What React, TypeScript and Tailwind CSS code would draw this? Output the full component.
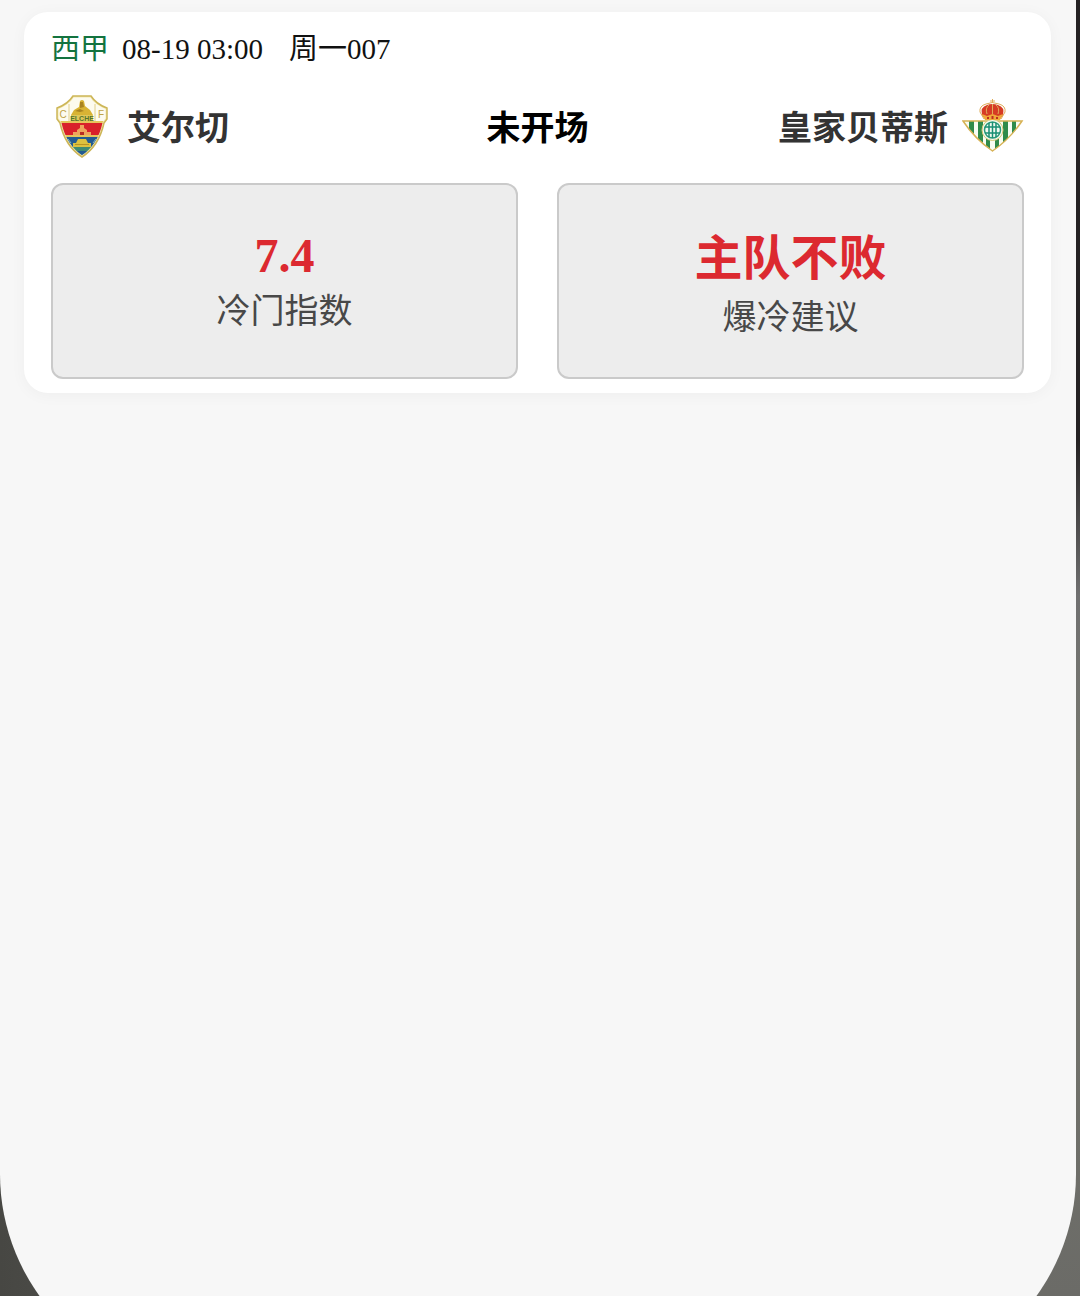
interface Team {
  name: string
  Crest: () => React.JSX.Element
}

interface Stat {
  value: string
  label: string
  valueClass: string
}

const elcheOutline = "M22 1h18Q45 9 56 13V24L53 28Q48 51 31 62Q14 51 9 28L6 24V13Q17 9 22 1Z"

function ElcheCrest() {
  return (
    <svg viewBox="0 0 62 64" className="h-16 w-[62px] shrink-0" role="img" aria-label="艾尔切">
      <defs>
        <clipPath id="elche-shield">
          <path d={elcheOutline} />
        </clipPath>
      </defs>
      <g clipPath="url(#elche-shield)">
        <path fill="#fdfbef" d="M0 0h62v64H0z" />
        <path fill="#d9202a" d="M0 28h62v13H0z" />
        <path fill="#245b91" d="M0 41h62v23H0z" />
        <path fill="#e5c45b" d="M0 26h62v2H0zM0 40h62v2H0z" />
        <path fill="#3f8a72" d="M16 52h30l-6 4H22z" />
        <path fill="none" stroke="#f3e9b4" strokeWidth="3" d={elcheOutline} />
      </g>
      <path fill="none" stroke="#e0cf8a" d="M18 9v17M44 9v17" />
      <path fill="#d8b334" d="M29 6q2-2 4 0l1 5 5 4 3 5H20l3-5 5-3z" />
      <path fill="#a98320" d="M29 7h3l1 5-4 1zM24 16l5-2 4 2-4 1z" />
      <path fill="#dfc75a" d="M20 20h22v6H20z" />
      <text x="31" y="26" textAnchor="middle" className="font-['Liberation_Sans'] text-[7px] font-bold" fill="#55752a">
        ELCHE
      </text>
      <text x="12" y="23" textAnchor="middle" className="font-['Liberation_Sans'] text-[10px] font-normal" fill="#c0a347">
        C
      </text>
      <text x="50" y="23" textAnchor="middle" className="font-['Liberation_Sans'] text-[10px] font-normal" fill="#c0a347">
        F
      </text>
      <path fill="#eea45d" d="M29 30h4v3l3 2v2h4v3H22v-3h4v-2l3-2z" />
      <path fill="#b82c23" d="M29 37h4v3h-4z" />
      <path fill="#dcc13f" d="M27 44h8l2 4h3v4H22v-4h3z" />
      <path fill="#b99222" d="M24 49h14v1H24z" />
      <path fill="none" stroke="#84b3c0" d="M17 44l3 4M45 44l-3 4" />
      <path fill="none" stroke="#cdb658" strokeWidth="1.5" d={elcheOutline} />
    </svg>
  )
}

function BetisCrest() {
  return (
    <svg viewBox="0 0 62 64" className="h-16 w-[62px] shrink-0" role="img" aria-label="皇家贝蒂斯">
      <defs>
        <clipPath id="betis-triangle">
          <path d="M1 26h59Q48 44 30.5 56Q13 44 1 26Z" />
        </clipPath>
      </defs>
      <g clipPath="url(#betis-triangle)">
        <path fill="#f7fcf3" d="M0 24h62v36H0z" />
        <path
          fill="#2f8b4b"
          d="M7 24h5v36H7zM16 24h5v36h-5zM24 24h4v36h-4zM33 24h4v36h-4zM41 24h5v36h-5zM50 24h4v36h-4z"
        />
      </g>
      <path fill="none" stroke="#d7b255" strokeWidth="1.5" d="M1 26h59Q48 44 30.5 56Q13 44 1 26Z" />
      <circle cx="30.5" cy="35" r="10.5" fill="#f3faf1" stroke="#d5c675" />
      <circle cx="30.5" cy="35" r="8" fill="none" stroke="#2b9a79" strokeWidth="1.5" />
      <path fill="none" stroke="#198f73" strokeWidth="1.5" d="M23 32h15M23 38h15M27 28v14M30.5 27v16M34 28v14" />
      <path fill="#d63b24" d="M20 20Q18 12 25 10q5-2 11 0 7 2 5 10l-3 4H23z" />
      <path
        fill="none"
        stroke="#dfac58"
        d="M22 24l-4-7q-1-6 6-8 6-3 13 0 7 2 6 8l-4 7M25 19q-2-6 2-9M36 19q2-6-2-9M30.5 9v10M30.5 4v4M28 6h5"
      />
      <path fill="#f0a83a" d="M20 19l5 2 5.500-2 5.500 2 5-2-3 6H23z" />
      <path fill="#bd2d20" d="M25 22h2v2h-2zM29.500 21h2v3h-2zM34 22h2v2h-2z" />
    </svg>
  )
}

const home: Team = { name: "艾尔切", Crest: ElcheCrest }
const away: Team = { name: "皇家贝蒂斯", Crest: BetisCrest }

const stats: Stat[] = [
  { value: "7.4", label: "冷门指数", valueClass: "leading-[62px]" },
  { value: "主队不败", label: "爆冷建议", valueClass: "leading-[68px]" },
]

function StatBox({ value, label, valueClass }: Stat) {
  return (
    <div className="flex h-[196px] flex-col items-center rounded-xl border-2 border-[#cacaca] bg-[#ededed] pt-10 text-center">
      <dt className="order-2 text-[34px] leading-[50px] text-[#484848]">{label}</dt>
      <dd className={`text-[48px] font-bold text-[#dc2930] ${valueClass}`}>{value}</dd>
    </div>
  )
}

function MatchCard() {
  return (
    <article className="rounded-3xl bg-white px-[27px] pt-4 pb-[14px] shadow-[0_2px_16px_rgba(0,0,0,0.04)]">
      <header className="flex items-center text-[29px] leading-[42px] text-[#111]">
        <span className="mr-[13px] text-[#13733f]">西甲</span>
        <time className="mr-[26px]">08-19 03:00</time>
        <span>周一007</span>
      </header>

      <div className="mt-[25px] grid grid-cols-[1fr_auto_1fr] items-center text-[34px] leading-[48px] font-bold text-[#333]">
        <div className="flex items-center gap-[14px]">
          <home.Crest />
          <span className="pt-1">{home.name}</span>
        </div>
        <span className="pt-1 text-black">未开场</span>
        <div className="flex items-center justify-end gap-[14px]">
          <span className="pt-1">{away.name}</span>
          <away.Crest />
        </div>
      </div>

      <dl className="mt-6 grid grid-cols-2 gap-[39px]">
        {stats.map((stat) => (
          <StatBox key={stat.label} {...stat} />
        ))}
      </dl>
    </article>
  )
}

export default function App() {
  return (
    <div className="h-screen overflow-hidden bg-[linear-gradient(to_right,#474743,transparent_50%),linear-gradient(to_bottom,#252223_0%,#252223_34%,#707070_46%,#77786f_60%,#6b6b67_100%)] pr-1 font-['Liberation_Serif','Noto_Sans_CJK_SC',sans-serif]">
      <main className="h-[calc(100%+86px)] rounded-b-[208px] bg-[#f7f7f7] pt-3 pr-[25px] pl-6">
        <MatchCard />
      </main>
    </div>
  )
}
